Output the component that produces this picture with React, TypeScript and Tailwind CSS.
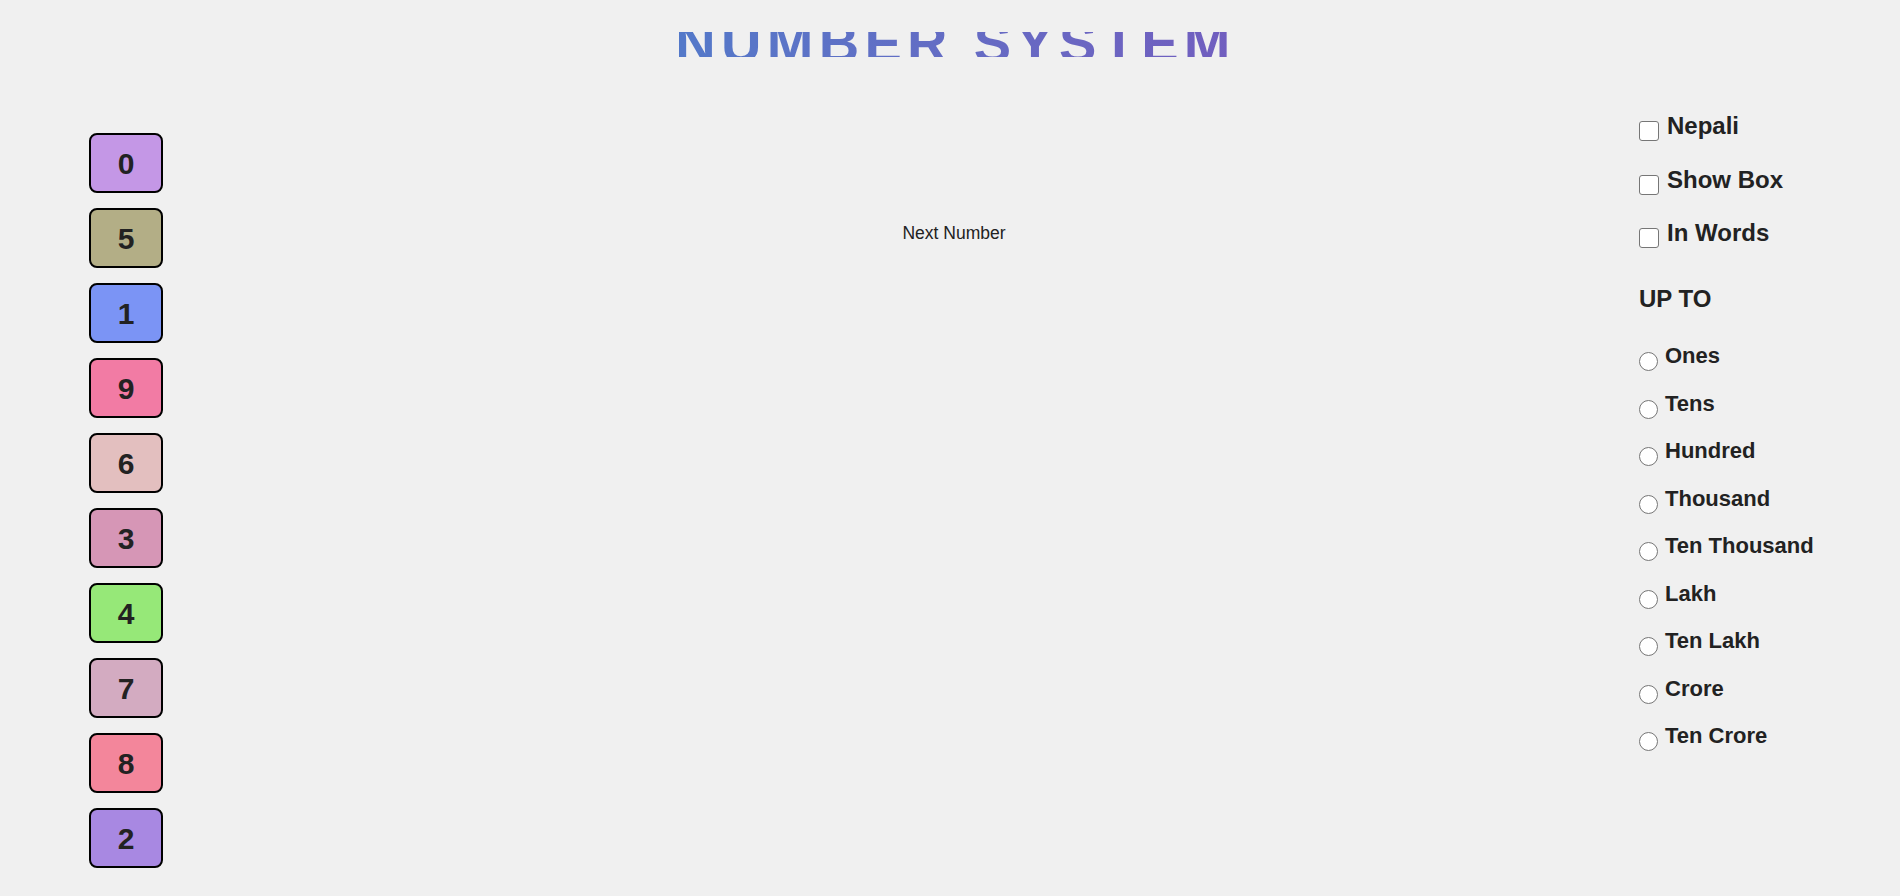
import { useState } from 'react';

const digits = [
  { n: 0, bg: 'bg-[#c497e6]' },
  { n: 5, bg: 'bg-[#b3ae86]' },
  { n: 1, bg: 'bg-[#7b94f5]' },
  { n: 9, bg: 'bg-[#f27ba4]' },
  { n: 6, bg: 'bg-[#e3bfbf]' },
  { n: 3, bg: 'bg-[#d696b6]' },
  { n: 4, bg: 'bg-[#96e878]' },
  { n: 7, bg: 'bg-[#d3abc1]' },
  { n: 8, bg: 'bg-[#f3869b]' },
  { n: 2, bg: 'bg-[#a888e2]' },
];

const options = ['Nepali', 'Show Box', 'In Words'];
const places = ['Ones', 'Tens', 'Hundred', 'Thousand', 'Ten Thousand', 'Lakh', 'Ten Lakh', 'Crore', 'Ten Crore'];

export default function App() {
  const [checked, setChecked] = useState<Record<string, boolean>>({});
  const [place, setPlace] = useState<string | null>(null);

  return (
    <div className="min-h-screen bg-[#f0f0f0] font-['Liberation_Sans',Arial,sans-serif] text-[#222]">
      <h1 className="flex justify-center pt-[32px] pb-[1px] pl-[11px]">
        <span className="block h-[25px] leading-[22px] text-[56px] font-bold tracking-[5.3px] bg-linear-to-r from-[#5379c9] to-[#715ebf] bg-clip-text text-transparent">
          NUMBER SYSTEM
        </span>
      </h1>

      <div className="flex">
        {/* number boxes */}
        <div className="w-[261px] shrink-0 pl-[89px] pt-[75px] flex flex-col gap-[15px]">
          {digits.map((d) => (
            <div
              key={d.n}
              className={`w-[74px] h-[60px] border-2 border-black rounded-[8px] flex items-center justify-center text-[30px] font-bold ${d.bg}`}
            >
              {d.n}
            </div>
          ))}
        </div>

        {/* middle */}
        <div className="flex-1 pt-[164px] pl-[8px] text-center">
          <button className="text-[17.5px] leading-[20px] text-[#222] bg-transparent">Next Number</button>
        </div>

        {/* settings */}
        <div className="w-[261px] shrink-0 pt-[54px]">
          <div className="flex flex-col gap-[24.5px]">
            {options.map((o) => (
              <label key={o} className="flex items-start gap-[8px] text-[24px] leading-[28px] font-bold cursor-pointer">
                <input
                  type="checkbox"
                  checked={!!checked[o]}
                  onChange={() => setChecked({ ...checked, [o]: !checked[o] })}
                  className="appearance-none mt-[9px] w-[20px] h-[20px] shrink-0 rounded-[3px] border border-[#767676] bg-white checked:bg-[#0075ff] checked:border-[#0075ff]"
                />
                <span>{o}</span>
              </label>
            ))}
          </div>

          <h3 className="mt-[37px] text-[24px] leading-[28px] font-bold">UP TO</h3>

          <div className="mt-[30px] flex flex-col">
            {places.map((p) => (
              <label key={p} className="flex items-start gap-[7px] h-[47.5px] text-[22px] leading-[25px] font-bold cursor-pointer">
                <input
                  type="radio"
                  name="upto"
                  checked={place === p}
                  onChange={() => setPlace(p)}
                  className="appearance-none mt-[9px] w-[19px] h-[19px] shrink-0 rounded-full border border-[#767676] bg-white checked:border-[5px] checked:border-[#0075ff]"
                />
                <span>{p}</span>
              </label>
            ))}
          </div>
        </div>
      </div>
    </div>
  );
}
